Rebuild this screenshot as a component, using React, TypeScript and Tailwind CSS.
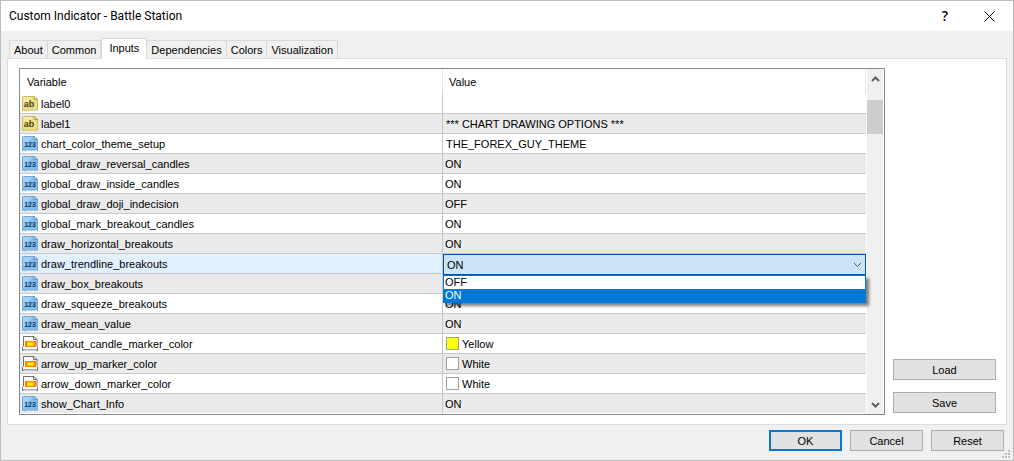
import { useState } from "react";
import clsx from "clsx";

type InputKind = "text" | "number" | "color";

interface IInput {
    name: string;
    value: string;
    kind: InputKind;
    swatch?: string;
    wide?: boolean;
}

const tabs = ["About", "Common", "Inputs", "Dependencies", "Colors", "Visualization"];

const inputs: IInput[] = [
    { name: "label0", value: "", kind: "text", wide: true },
    { name: "label1", value: "*** CHART DRAWING OPTIONS ***", kind: "text", wide: true },
    { name: "chart_color_theme_setup", value: "THE_FOREX_GUY_THEME", kind: "number", wide: true },
    { name: "global_draw_reversal_candles", value: "ON", kind: "number" },
    { name: "global_draw_inside_candles", value: "ON", kind: "number" },
    { name: "global_draw_doji_indecision", value: "OFF", kind: "number" },
    { name: "global_mark_breakout_candles", value: "ON", kind: "number" },
    { name: "draw_horizontal_breakouts", value: "ON", kind: "number" },
    { name: "draw_trendline_breakouts", value: "ON", kind: "number" },
    { name: "draw_box_breakouts", value: "ON", kind: "number" },
    { name: "draw_squeeze_breakouts", value: "ON", kind: "number" },
    { name: "draw_mean_value", value: "ON", kind: "number" },
    { name: "breakout_candle_marker_color", value: "Yellow", kind: "color", swatch: "bg-[#ffff00]" },
    { name: "arrow_up_marker_color", value: "White", kind: "color", swatch: "bg-white" },
    { name: "arrow_down_marker_color", value: "White", kind: "color", swatch: "bg-white" },
    { name: "show_Chart_Info", value: "ON", kind: "number" },
];

const options = ["OFF", "ON"];

const paper = "M.5 2L2 1.5H12L15.5 4V15.5L14 14.5L12.5 16L11 14.5L9.5 15.5L8 14.5L6.5 15.5L5 14.5L3.5 16L2 15L.5 15.5Z";

function InputIcon({ kind }: { kind: InputKind }) {
    if (kind === "color") {
        return (
            <svg width="16" height="17" viewBox="0 0 16 17" className="shrink-0" aria-hidden="true">
                <path d="M.5 16V1.5H12.5L15.5 4.5V16L13.5 14L12 15.5L10.5 14L9 15.5L7.5 14L6 15.5L4.5 14L3 15.5L2 14Z" fill="#fafafa" />
                <path d="M1.5 11.5V1.5H12L15 4.5V11.5M11.5 1.5V4.5H15" fill="none" stroke="#6f6f6f" />
                <path d="M.5 12V16L2.5 14L4 15.5L5.5 14L7 15.5L8.5 14L10 15.5L11.5 14L13 15.5L14 14.5L15.5 16V12" fill="none" stroke="#6f6f6f" />
                <rect x="3" y="6" width="11" height="6" fill="#ff8400" />
                <rect x="5" y="7" width="7" height="4" fill="#ffc000" />
                <rect x="6" y="8" width="5" height="2" fill="#ffff00" />
            </svg>
        );
    }

    const isText = kind === "text";

    return (
        <svg width="16" height="17" viewBox="0 0 16 17" className="shrink-0" aria-hidden="true">
            <path d={paper} fill={isText ? "#ebdf87" : "#86bbea"} stroke={isText ? "#cdba5c" : "#6fa8da"} />
            <path d="M1 2H11L1 12Z" fill={isText ? "#f3eba5" : "#a3cff5"} />
            <path d="M12 1.5V4.5H15.5Z" fill={isText ? "#fffbd5" : "#d5eafb"} stroke={isText ? "#b9a548" : "#5e9bd1"} />
            {isText ? (
                <text x="7" y="12" textAnchor="middle" fill="#4d4419" fontFamily="Liberation Sans, sans-serif" fontSize="9" fontWeight="bold">ab</text>
            ) : (
                <text x="8" y="12" textAnchor="middle" fill="#0c3b66" fontFamily="Liberation Sans, sans-serif" fontSize="7" fontWeight="bold">123</text>
            )}
        </svg>
    );
}

function Chevron({ up, className }: { up?: boolean; className?: string }) {
    return (
        <svg width="9" height="6" viewBox="0 0 9 6" fill="none" stroke="currentColor" className={className} aria-hidden="true">
            <path d={up ? "M1 5L4.5 1.5L8 5" : "M1 1L4.5 4.5L8 1"} />
        </svg>
    );
}

function DialogButton({ children, primary, className }: { children: string; primary?: boolean; className?: string }) {
    return (
        <button
            type="button"
            className={clsx(
                "flex h-[21px] items-center justify-center bg-[#e1e1e1]",
                primary ? "border-2 border-[#0078d7]" : "border border-[#adadad]",
                className
            )}
        >
            {children}
        </button>
    );
}

function OptionEditor({ label }: { label: string }) {
    const [value, setValue] = useState("ON");

    return (
        <div className="absolute inset-x-0 top-0 z-10">
            <select
                aria-label={label}
                value={value}
                onChange={(e) => setValue(e.target.value)}
                className="block h-[21px] w-full appearance-none border border-[#005499] bg-[#cce4f7] pl-[3px] leading-4 outline-none"
            >
                {options.map((option) => <option key={option}>{option}</option>)}
            </select>
            <Chevron className="pointer-events-none absolute top-2 right-1 text-[#4a5a68]" />
            <ul role="listbox" aria-label={label} className="border border-[#0078d7] bg-white leading-[13px] shadow-[3px_3px_3px_rgba(0,0,0,0.5)]">
                {options.map((option) => (
                    <li
                        key={option}
                        role="option"
                        aria-selected={option === value}
                        onClick={() => setValue(option)}
                        className={clsx("h-[13px] pl-px", option === value && "bg-[#0078d7] text-white")}
                    >
                        {option}
                    </li>
                ))}
            </ul>
        </div>
    );
}

function InputsTable() {
    const [selected, setSelected] = useState("draw_trendline_breakouts");

    return (
        <div className="flex min-w-0 flex-1 border border-[#828790] bg-white">
            <table className="min-w-0 flex-1 table-fixed border-separate border-spacing-0 text-left">
                <thead>
                    <tr className="h-[25px]">
                        <th className="w-1/2 border-r border-[#e5e5e5] p-0 pl-[7px] font-normal">Variable</th>
                        <th className="w-1/2 border-r border-[#e5e5e5] p-0 pl-1.5 font-normal">Value</th>
                    </tr>
                </thead>
                <tbody>
                    {inputs.map((item, idx) => {
                        const active = item.name === selected;

                        return (
                            <tr
                                key={item.name}
                                onClick={() => setSelected(item.name)}
                                className={clsx("group h-5", active ? "bg-[#e0f0ff]" : idx % 2 === 1 && "bg-[#eaeaea]")}
                            >
                                <td className="border-r border-b border-[#c8c8c8] p-0 pl-0.5 group-last:border-b-white">
                                    <div className="flex h-[19px] items-center gap-[3px]">
                                        <InputIcon kind={item.kind} />
                                        {item.name}
                                    </div>
                                </td>
                                <td className={clsx("relative border-b border-[#c8c8c8] p-0 group-last:border-b-white", item.wide || item.swatch ? "pl-[3px]" : "pl-0.5")}>
                                    {active ? <OptionEditor label={item.name} /> : (
                                        <div className="flex h-[19px] items-center gap-[3px]">
                                            {item.swatch && <span className={clsx("size-[13px] border border-[#a0a0a0]", item.swatch)} />}
                                            {item.value}
                                        </div>
                                    )}
                                </td>
                            </tr>
                        );
                    })}
                </tbody>
            </table>
            <div className="mr-px ml-px flex w-4 flex-col items-center bg-[#f0f0f0] text-[#606060]">
                <button type="button" aria-label="Scroll up" className="flex h-[31px] w-full shrink-0 justify-center pt-[7px]">
                    <Chevron up className="stroke-2" />
                </button>
                <div className="h-[34px] w-full bg-[#cdcdcd]" />
                <button type="button" aria-label="Scroll down" className="mt-auto flex h-[18px] w-full items-center justify-center">
                    <Chevron className="stroke-2" />
                </button>
            </div>
        </div>
    );
}

export default function App() {
    const [tab, setTab] = useState("Inputs");

    return (
        <div className="flex min-h-screen flex-col border border-[#bcbcbc] bg-[#f0f0f0] font-['Liberation_Sans',Arial,sans-serif] text-[11px] leading-4 text-black">
            <header className="flex h-[30px] items-center bg-white pr-4 pl-2">
                <h1 className="flex-1 font-[Roboto,sans-serif] text-xs">Custom Indicator - Battle Station</h1>
                <button type="button" aria-label="Help" className="w-8 font-['Open_Sans',sans-serif] text-sm font-semibold">?</button>
                <button type="button" aria-label="Close" className="ml-5 flex w-4 justify-center">
                    <svg width="11" height="11" viewBox="0 0 11 11" stroke="currentColor" aria-hidden="true">
                        <path d="M.5 .5L10.5 10.5M10.5 .5L.5 10.5" />
                    </svg>
                </button>
            </header>

            <div role="tablist" className="flex items-end px-2 pt-[7px]">
                {tabs.map((name) => (
                    <button
                        key={name}
                        type="button"
                        role="tab"
                        aria-selected={name === tab}
                        onClick={() => setTab(name)}
                        className={clsx(
                            "border-[#d9d9d9]",
                            name === tab
                                ? "relative z-10 -mb-px h-[21px] border border-b-0 bg-white px-[7px] pb-[3px]"
                                : "h-[18px] border-t border-r px-1 first:border-l"
                        )}
                    >
                        {name}
                    </button>
                ))}
            </div>

            <main className="mx-1.5 flex flex-1 gap-2 border border-[#dcdcdc] bg-white py-[9px] pr-[10px] pl-[11px]">
                <InputsTable />
                <div className="flex w-[103px] flex-col justify-end gap-3 pb-0.5">
                    <DialogButton>Load</DialogButton>
                    <DialogButton>Save</DialogButton>
                </div>
            </main>

            <footer className="relative flex justify-end gap-2 pt-[5px] pr-[9px] pb-[9px]">
                <DialogButton primary className="w-[73px]">OK</DialogButton>
                <DialogButton className="w-[73px]">Cancel</DialogButton>
                <DialogButton className="w-[73px]">Reset</DialogButton>
                <svg width="8" height="8" viewBox="0 0 8 8" fill="#bfbfbf" className="absolute right-[3px] bottom-0.5" aria-hidden="true">
                    <path d="M6 0h2v2H6zM3 3h2v2H3zM6 3h2v2H6zM0 6h2v2H0zM3 6h2v2H3zM6 6h2v2H6z" />
                </svg>
            </footer>
        </div>
    );
}
